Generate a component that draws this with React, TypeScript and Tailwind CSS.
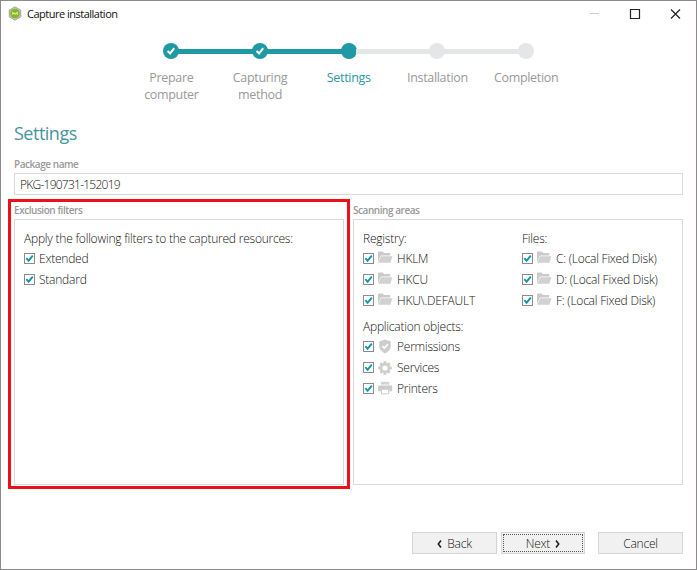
import type { ReactNode } from "react"
import clsx from "clsx"

type StepState = "done" | "current" | "pending"

const steps: { label: string; state: StepState }[] = [
  { label: "Prepare computer", state: "done" },
  { label: "Capturing method", state: "done" },
  { label: "Settings", state: "current" },
  { label: "Installation", state: "pending" },
  { label: "Completion", state: "pending" },
]

function AppLogo() {
  return (
    <svg width="14" height="15" viewBox="0 0 14 15" className="block -translate-y-px">
      <path d="M7 .9 12.700 4.100v6.800L7 14.100 1.300 10.900V4.100Z" fill="#c9c7cc" stroke="#a19fa6" strokeWidth="1" />
      <circle cx="7" cy="7.500" r="4.800" fill="#86b61d" />
      <path d="M4.700 8.800V6.500L7 8l2.300-1.500v2.300" fill="none" stroke="#dcedb0" strokeWidth="1.100" />
    </svg>
  )
}

function FolderIcon() {
  return (
    <svg width="15" height="13" viewBox="0 0 15 13" className="block -translate-y-px">
      <path d="M0 11.200V1.600C0 1 .4.600 1 .600h3.700l1.300 1.500h5.300c.6 0 1 .4 1 1v1.500H3.500L2.300 5.500Z" fill="#cbcbcb" />
      <path d="M3.500 5.200H14.400L12.400 11.800H.3L2.700 5.900Z" fill="#d1d1d1" />
    </svg>
  )
}

function ShieldIcon() {
  return (
    <svg width="14" height="15" viewBox="0 0 14 15" className="block">
      <path d="M7 .5 12.800 2.600V7c0 3.300-2.400 5.900-5.800 7.400C3.600 12.900 1.200 10.300 1.200 7V2.600Z" fill="#cdcdcd" />
      <path d="m4.300 7.100 2 2 3.600-3.900" fill="none" stroke="#fff" strokeWidth="1.500" />
    </svg>
  )
}

function GearIcon() {
  return (
    <svg width="14" height="14" viewBox="0 0 14 14" className="block">
      <g stroke="#cdcdcd" strokeWidth="2.800">
        <path d="M7 .2v13.600M.2 7h13.600M2.300 2.300l9.400 9.400M11.700 2.300l-9.400 9.400" />
      </g>
      <circle cx="7" cy="7" r="5.100" fill="#cdcdcd" />
      <circle cx="7" cy="7" r="2.600" fill="#fff" />
    </svg>
  )
}

function PrinterIcon() {
  return (
    <svg width="15" height="14" viewBox="0 0 15 14" className="block -translate-y-px">
      <path d="M3 .800h8.200v2.800H3Z" fill="#d4d4d4" />
      <path d="M1.200 4.400h12c.6 0 1 .4 1 1v4.800h-3V8H3.200v2.200h-3V5.400c0-.6.4-1 1-1Z" fill="#cbcbcb" />
      <path d="M3.500 8.300h7.200v4.500H3.500Z" fill="#fff" stroke="#cbcbcb" />
    </svg>
  )
}

function Checkbox() {
  return (
    <svg width="11" height="11" viewBox="0 0 11 11" className="block shrink-0">
      <rect x=".5" y=".5" width="10" height="10" fill="#fff" stroke="#8b8b8b" />
      <path d="m2.300 5.200 2.300 2.500 4.200-5.100" fill="none" stroke="#1597a3" strokeWidth="1.900" />
    </svg>
  )
}

function CheckRow({ label, icon }: { label: string; icon?: ReactNode }) {
  return (
    <div className="flex h-[21px] items-center">
      <Checkbox />
      {icon && <span className="ml-1 w-[14px] shrink-0">{icon}</span>}
      <span className={clsx("pt-px whitespace-nowrap", icon ? "ml-[5px]" : "ml-1")}>{label}</span>
    </div>
  )
}

function Step({ label, state, index }: { label: string; state: StepState; index: number }) {
  const reached = state !== "pending"
  const nextReached = index < 2
  return (
    <li className="flex w-[88.700px] flex-col items-center">
      <div className="flex w-full items-center">
        <span className={clsx("h-[5px] flex-1", index === 0 ? "bg-transparent" : reached ? "bg-[#1f99a3]" : "bg-[#e5e6e8]")} />
        <span className={clsx("-mx-px flex size-4 items-center justify-center rounded-full", reached ? "bg-[#1f99a3]" : "bg-[#e5e6e8]")}>
          {state === "done" && (
            <svg width="10" height="10" viewBox="0 0 10 10">
              <path d="m1.600 5 2.500 2.400 4.100-5.200" fill="none" stroke="#fff" strokeWidth="2" />
            </svg>
          )}
        </span>
        <span className={clsx("h-[5px] flex-1", index === 4 ? "bg-transparent" : nextReached ? "bg-[#1f99a3]" : "bg-[#e5e6e8]")} />
      </div>
      <span
        className={clsx(
          "mt-[10px] w-[70px] text-center text-[12.500px] leading-[17px] tracking-[-0.320px]",
          state === "current" ? "text-[#2a9aa5]" : "text-[#999]",
        )}
      >
        {label}
      </span>
    </li>
  )
}

function Panel({ title, children }: { title: string; children: ReactNode }) {
  return (
    <section className="flex w-[330px] flex-col">
      <h2 className="h-[15px] text-[10px] leading-[12px] font-semibold tracking-[-0.450px] text-[#999]">{title}</h2>
      <div className="h-[266px] border border-[#d9d9d9] pt-2 pl-[9px]">{children}</div>
    </section>
  )
}

export default function App() {
  return (
    <div className="relative flex h-[570px] w-[697px] flex-col border border-[#8c8a8b] bg-white font-['Open_Sans','Noto_Sans',sans-serif] text-[12px] font-light tracking-[-0.220px] text-[#111]">
      {/* Title bar */}
      <header className="flex h-[26px] items-center pl-[7px]">
        <AppLogo />
        <span className="ml-[5px] flex-1 text-[11px] font-normal tracking-[-0.500px] text-[#111]">Capture installation</span>
        <svg width="110" height="14" viewBox="0 0 110 14" className="mr-[5px]" fill="none">
          <path d="M9 6.500h9" stroke="#ccc" />
          <path d="M49.500 2.500h9v9h-9Z" stroke="#222" strokeWidth="1.200" />
          <path d="m90 2.500 9 9m0-9-9 9" stroke="#222" strokeWidth="1.200" />
        </svg>
      </header>

      {/* Wizard progress */}
      <ol className="mt-4 ml-[126px] flex h-[82px] font-normal">
        {steps.map((step, i) => (
          <Step key={step.label} index={i} {...step} />
        ))}
      </ol>

      <main className="px-[13px]">
        <h1 className="h-[33px] text-[18px] leading-[17px] font-normal tracking-[-0.500px] text-[#4795a0]">Settings</h1>
        <div className="h-[15px] text-[10px] leading-[12px] font-semibold tracking-[-0.450px] text-[#999]">Package name</div>
        <div className="flex h-[22px] w-[669px] items-center border border-[#d9d9d9] pt-px pl-[5px] tracking-[-0.750px]">
          PKG-190731-152019
        </div>
        <div className="mt-[9px] flex gap-[9px]">
          <Panel title="Exclusion filters">
            <p className="h-5 leading-[22px]">Apply the following filters to the captured resources:</p>
            <CheckRow label="Extended" />
            <CheckRow label="Standard" />
          </Panel>
          <Panel title="Scanning areas">
            <div className="grid grid-cols-[159px_1fr]">
              <div>
                <p className="h-5 leading-[22px]">Registry:</p>
                <CheckRow label="HKLM" icon={<FolderIcon />} />
                <CheckRow label="HKCU" icon={<FolderIcon />} />
                <CheckRow label="HKU\.DEFAULT" icon={<FolderIcon />} />
                <p className="mt-[5px] h-5 leading-[22px]">Application objects:</p>
                <CheckRow label="Permissions" icon={<ShieldIcon />} />
                <CheckRow label="Services" icon={<GearIcon />} />
                <CheckRow label="Printers" icon={<PrinterIcon />} />
              </div>
              <div>
                <p className="h-5 leading-[22px]">Files:</p>
                <CheckRow label="C: (Local Fixed Disk)" icon={<FolderIcon />} />
                <CheckRow label="D: (Local Fixed Disk)" icon={<FolderIcon />} />
                <CheckRow label="F: (Local Fixed Disk)" icon={<FolderIcon />} />
              </div>
            </div>
          </Panel>
        </div>
      </main>

      <footer className="mt-[47px] flex pl-[411px]">
        <button className="flex h-[22px] w-[85px] items-center justify-center gap-[5px] border border-[#d6d6d6] bg-[#f1f1f1] pt-px">
          <svg width="5" height="8" viewBox="0 0 5 8" fill="none">
            <path d="M4 .5 1.300 4 4 7.500" stroke="#222" strokeWidth="1.600" />
          </svg>
          Back
        </button>
        <button className="ml-1 h-[22px] w-[84px] border border-[#d6d6d6] bg-[#f1f1f1] p-px">
          <span className="flex h-full items-center justify-center gap-[5px] border border-dotted border-[#555] pt-px">
            Next
            <svg width="5" height="8" viewBox="0 0 5 8" fill="none">
              <path d="M1 .5 3.700 4 1 7.500" stroke="#222" strokeWidth="1.600" />
            </svg>
          </span>
        </button>
        <button className="ml-[13px] h-[22px] w-[85px] border border-[#d6d6d6] bg-[#f1f1f1] pt-px">Cancel</button>
      </footer>

      {/* Highlight around the exclusion filters */}
      <div className="pointer-events-none absolute top-[198px] left-[7px] h-[290px] w-[342px] border-[3px] border-[#ee1019]" />
    </div>
  )
}
